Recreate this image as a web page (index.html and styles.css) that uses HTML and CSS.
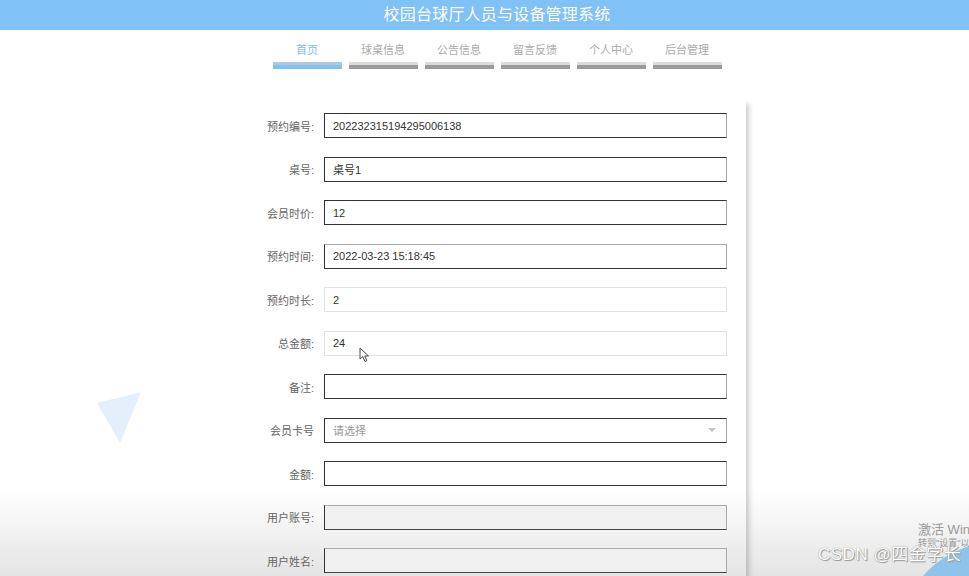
FILE: index.html
```html
<!DOCTYPE html>
<html lang="zh-CN">
<head>
  <meta charset="UTF-8" />
  <title>校园台球厅人员与设备管理系统</title>
  <link rel="stylesheet" href="styles.css">
</head>
<body>
  <header class="topbar">
    <h1>校园台球厅人员与设备管理系统</h1>
  </header>

  <div class="page">
    <nav class="menu">
      <a class="menu-item active">首页</a>
      <a class="menu-item">球桌信息</a>
      <a class="menu-item">公告信息</a>
      <a class="menu-item">留言反馈</a>
      <a class="menu-item">个人中心</a>
      <a class="menu-item">后台管理</a>
    </nav>

    <main class="card">
      <form class="form">
        <div class="row">
          <label>预约编号:</label>
          <input type="text" value="202232315194295006138" />
        </div>
        <div class="row">
          <label>桌号:</label>
          <input type="text" value="桌号1" />
        </div>
        <div class="row">
          <label>会员时价:</label>
          <input type="text" value="12" />
        </div>
        <div class="row">
          <label>预约时间:</label>
          <input type="text" class="soft-top" value="2022-03-23 15:18:45" />
        </div>
        <div class="row">
          <label>预约时长:</label>
          <input type="text" class="readonly" value="2" />
        </div>
        <div class="row">
          <label>总金额:</label>
          <input type="text" class="readonly" value="24" />
        </div>
        <div class="row">
          <label>备注:</label>
          <input type="text" value="" />
        </div>
        <div class="row">
          <label>会员卡号</label>
          <div class="select">
            <span class="placeholder">请选择</span>
            <span class="arrow"></span>
          </div>
        </div>
        <div class="row">
          <label>金额:</label>
          <input type="text" value="" />
        </div>
        <div class="row">
          <label>用户账号:</label>
          <input type="text" class="disabled soft-top" value="" disabled />
        </div>
        <div class="row">
          <label>用户姓名:</label>
          <input type="text" class="disabled soft-top" value="" disabled />
        </div>
      </form>
    </main>
  </div>

  <!-- background decoration -->
  <svg class="deco-triangle" width="50" height="56" viewBox="0 0 50 56">
    <polygon points="1,12 45,1 24,52" fill="#e3f0fc" />
  </svg>

  <!-- mouse pointer -->
  <svg class="pointer" width="12" height="16" viewBox="0 0 12 16">
    <path d="M1 1 L1 12 L3.8 9.6 L6 14.5 L7.8 13.7 L5.7 9 L9.5 9 Z" fill="#fff" stroke="#444" stroke-width="1" stroke-linejoin="round" />
  </svg>

  <!-- watermarks -->
  <svg class="corner-blob" width="46" height="30" viewBox="0 0 46 30">
    <path d="M0 30 C12 16 28 6 46 0 L46 30 Z" fill="#8fc3ea" />
  </svg>
  <div class="win-mark">
    <div class="win-title">激活 Win</div>
    <div class="win-sub">转到"设置"以</div>
  </div>
  <div class="csdn-mark">CSDN @四金学长</div>
</body>
</html>
```

FILE: styles.css
```css
html {
  background: linear-gradient(to bottom, #fff 0, #fff 85%, #e4e4e4 100%) fixed;
  min-height: 100%;
}

body {
  margin: 0;
  font-family: "Liberation Sans", "Noto Sans CJK SC", sans-serif;
  color: #333;
  overflow: hidden;
  height: 576px;
}

.topbar {
  height: 30px;
  background: #80c1f6;
  padding-left: 25px;
}

.topbar h1 {
  margin: 0;
  line-height: 30px;
  text-align: center;
  font-size: 16px;
  font-weight: normal;
  color: #fff;
  letter-spacing: 0.2px;
}

.page {
  padding-left: 25px;
}

.menu {
  display: flex;
  justify-content: center;
  gap: 7px;
  padding-top: 13px;
}

.menu-item {
  width: 69px;
  text-align: center;
  font-size: 11px;
  line-height: 14px;
  color: #aaa;
  cursor: pointer;
}

.menu-item::after {
  content: "";
  display: block;
  height: 7px;
  margin-top: 5px;
  background: linear-gradient(to bottom, #dcdcdc 0, #dcdcdc 40%, #9a9a9a 40%, #9a9a9a 100%);
}

.menu-item.active {
  color: #7fbcee;
}

.menu-item.active::after {
  background: linear-gradient(to bottom, #b3c7dc 0, #b3c7dc 40%, #80c1f4 40%, #80c1f4 100%);
}

.card {
  width: 498px;
  margin: 31px auto 0;
  padding: 13px 0 40px;
  box-sizing: border-box;
  box-shadow: 7px 0 5px -4px rgba(0, 0, 0, 0.2);
}

.row {
  display: flex;
  align-items: center;
  height: 25px;
  margin-bottom: 18.5px;
}

.row label {
  width: 66px;
  margin-right: 10px;
  text-align: right;
  font-size: 11px;
  color: #666;
}

.row input,
.select {
  width: 403px;
  height: 25px;
  box-sizing: border-box;
  padding: 0 8px;
  font-family: inherit;
  font-size: 11px;
  color: #333;
  background: #fff;
  border: 1px solid;
  border-color: #333 #a8a8a8 #333 #333;
  outline: none;
}

.row input.soft-top {
  border-top-color: #aaa;
}

.row input.readonly {
  border-color: #e2e2e2;
}

.row input.disabled {
  background: #f0f0f0;
  border-color: #aaa #aaa #444 #333;
}

.select {
  display: flex;
  align-items: center;
  justify-content: space-between;
}

.placeholder {
  color: #999;
}

.arrow {
  width: 0;
  height: 0;
  border-left: 4px solid transparent;
  border-right: 4px solid transparent;
  border-top: 4px solid #c4c4c4;
  margin-right: 2px;
}

.deco-triangle {
  position: absolute;
  left: 96px;
  top: 391px;
}

.pointer {
  position: absolute;
  left: 359px;
  top: 347px;
}

.corner-blob {
  position: absolute;
  right: 0;
  bottom: 0;
}

.win-mark {
  position: absolute;
  left: 918px;
  top: 522px;
  white-space: nowrap;
  color: #9a9a9a;
}

.win-title {
  font-size: 13px;
  line-height: 16px;
}

.win-sub {
  font-size: 9px;
  line-height: 11px;
}

.csdn-mark {
  position: absolute;
  left: 818px;
  top: 544px;
  font-size: 17px;
  line-height: 22px;
  color: #fff;
  letter-spacing: 0.5px;
  text-shadow: 0 0 1px #777, 1px 1px 1px #999;
  white-space: nowrap;
}
```
